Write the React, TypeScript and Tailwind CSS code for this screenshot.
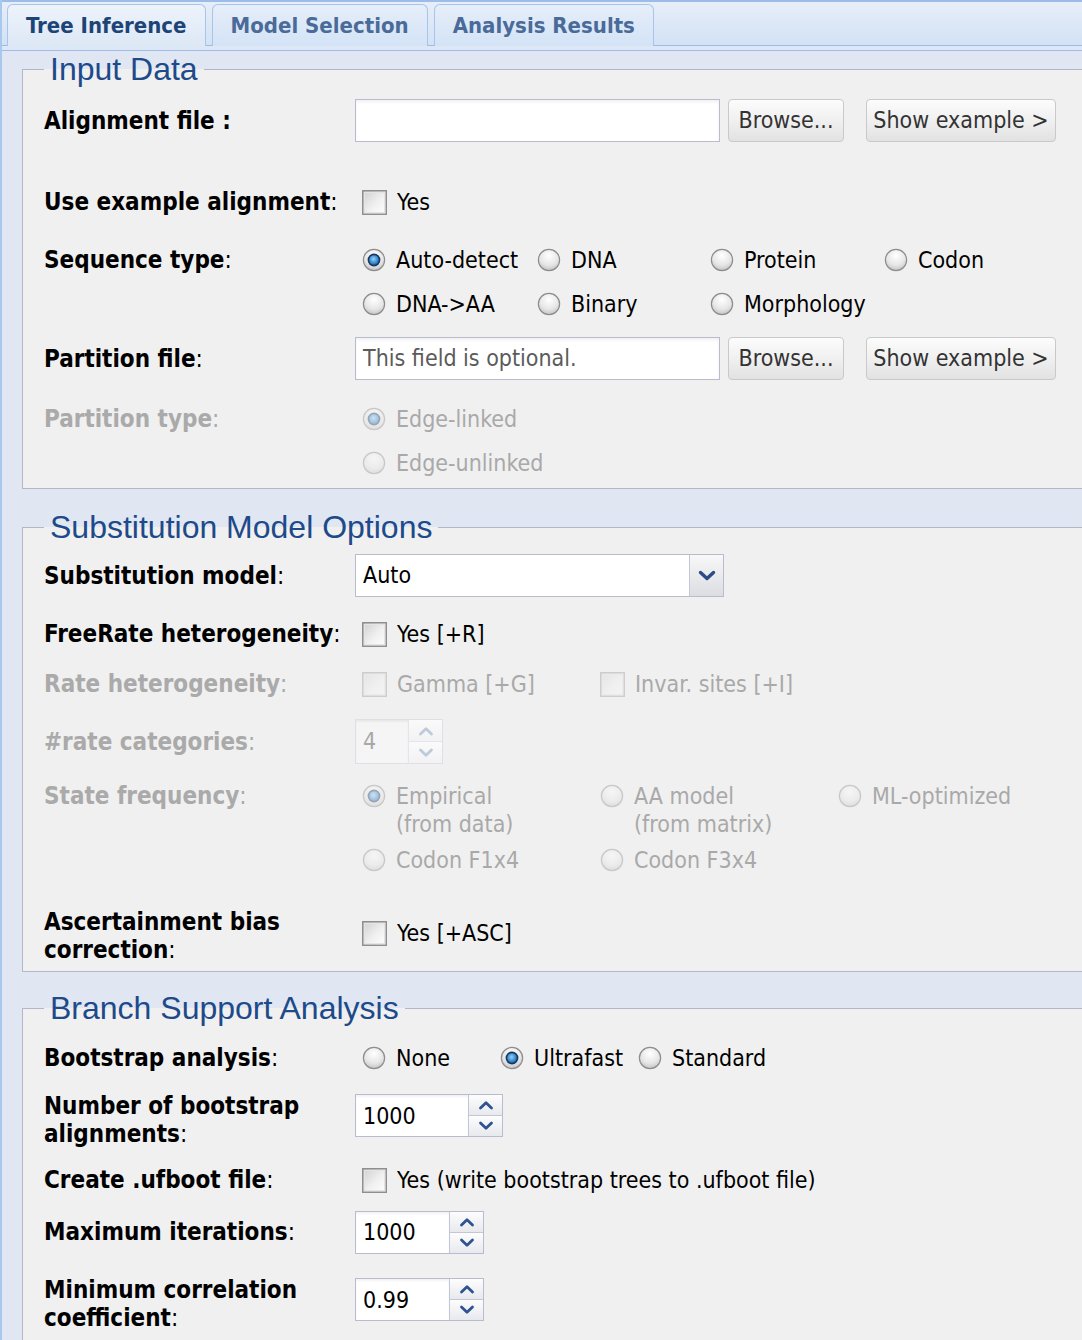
import React from "react";

const ui = "font-['DejaVu_Sans_Condensed','DejaVu_Sans',sans-serif]";
const legendFont = "font-['Liberation_Sans',Arial,sans-serif]";

function Radio({ checked = false, disabled = false }: { checked?: boolean; disabled?: boolean }) {
  const id = `r-${checked ? "on" : "off"}`;
  return (
    <svg width="24" height="24" viewBox="0 0 24 24" className={`shrink-0 ${disabled ? "opacity-40" : ""}`}>
      <defs>
        <radialGradient id={`${id}-bg`} cx="50%" cy="30%" r="75%">
          <stop offset="0" stopColor="#ffffff" />
          <stop offset="0.6" stopColor="#e6e6e6" />
          <stop offset="1" stopColor="#bdbdbd" />
        </radialGradient>
        <radialGradient id={`${id}-dot`} cx="45%" cy="40%" r="60%">
          <stop offset="0" stopColor="#8fd3fb" />
          <stop offset="1" stopColor="#1b6db6" />
        </radialGradient>
      </defs>
      <circle cx="12" cy="12" r="10.6" fill={`url(#${id}-bg)`} stroke="#8d8d8d" strokeWidth="1.2" />
      {checked && (
        <>
          <circle cx="12" cy="12" r="6.4" fill="#16355f" />
          <circle cx="12" cy="12" r="4.8" fill={`url(#${id}-dot)`} />
        </>
      )}
    </svg>
  );
}

function Checkbox({ disabled = false }: { disabled?: boolean }) {
  return (
    <svg width="25" height="25" viewBox="0 0 25 25" className={`shrink-0 ${disabled ? "opacity-35" : ""}`}>
      <defs>
        <linearGradient id="cb-bg" x1="0" y1="0" x2="1" y2="1">
          <stop offset="0" stopColor="#cfcfcf" />
          <stop offset="0.55" stopColor="#f0f0f0" />
          <stop offset="1" stopColor="#ffffff" />
        </linearGradient>
      </defs>
      <rect x="0.75" y="0.75" width="23.5" height="23.5" fill="url(#cb-bg)" stroke="#8f8f8f" strokeWidth="1.5" />
      <rect x="2.5" y="2.5" width="20" height="20" fill="none" stroke="#e4e4e4" strokeWidth="1" />
    </svg>
  );
}

function Chevron({ dir, disabled = false }: { dir: "up" | "down"; disabled?: boolean }) {
  return (
    <svg width="16" height="10" viewBox="0 0 16 10">
      <path
        d={dir === "up" ? "M2.5 8 L8 2.8 L13.5 8" : "M2.5 2 L8 7.2 L13.5 2"}
        stroke={disabled ? "#bccada" : "#2f5291"}
        strokeWidth="2.8"
        fill="none"
        strokeLinecap="round"
        strokeLinejoin="round"
      />
    </svg>
  );
}

function Button({ children, w }: { children: React.ReactNode; w: string }) {
  return (
    <div
      className={`${w} h-[43px] flex items-center justify-center rounded-[4px] border border-[#c9c9c9] bg-gradient-to-b from-[#fcfcfc] via-[#f0f0f0] to-[#e2e2e2] text-[#333333] text-[23px]`}
    >
      {children}
    </div>
  );
}

function Spin({ value, w, h = "h-[43px]", disabled = false }: { value: string; w: string; h?: string; disabled?: boolean }) {
  return (
    <div
      className={`${w} ${h} flex border ${
        disabled ? "border-[#dfdfe6] bg-[#f5f5f6] text-[#a8a8a8]" : "border-[#b9bcce] bg-white text-black"
      }`}
    >
      <div className="flex-1 flex items-center pl-[7px] text-[23px] shadow-[inset_0_2px_2px_rgba(0,0,0,0.05)]">{value}</div>
      <div className={`w-[34px] flex flex-col border-l ${disabled ? "border-[#e4e4ea]" : "border-[#c3c6d6]"}`}>
        <div
          className={`flex-1 flex items-center justify-center bg-gradient-to-b ${
            disabled ? "from-[#fafafa] to-[#f2f2f4]" : "from-[#fdfdfd] to-[#e8e9ee]"
          }`}
        >
          <Chevron dir="up" disabled={disabled} />
        </div>
        <div
          className={`flex-1 flex items-center justify-center border-t bg-gradient-to-b ${
            disabled ? "border-[#e4e4ea] from-[#fafafa] to-[#f2f2f4]" : "border-[#c3c6d6] from-[#fdfdfd] to-[#e8e9ee]"
          }`}
        >
          <Chevron dir="down" disabled={disabled} />
        </div>
      </div>
    </div>
  );
}

function Opt({
  kind,
  checked = false,
  disabled = false,
  children,
}: {
  kind: "radio" | "check";
  checked?: boolean;
  disabled?: boolean;
  children: React.ReactNode;
}) {
  return (
    <div className={`flex items-center gap-[10px] ${disabled ? "text-[#a9a9a9]" : "text-black"}`}>
      {kind === "radio" ? <Radio checked={checked} disabled={disabled} /> : <Checkbox disabled={disabled} />}
      <span className="whitespace-nowrap">{children}</span>
    </div>
  );
}

function Label({ children, disabled = false, colon = true }: { children: React.ReactNode; disabled?: boolean; colon?: boolean }) {
  return (
    <div className={`text-[24px] ${disabled ? "text-[#aaaaaa]" : "text-black"}`}>
      <span className="font-bold">{children}</span>
      {colon && ":"}
    </div>
  );
}

function Section({ title, children, className = "" }: { title: string; children: React.ReactNode; className?: string }) {
  return (
    <fieldset className={`ml-[20px] min-w-0 border border-r-0 border-[#b3b6c8] bg-[#f0f0f0] pl-[21px] ${className}`}>
      <legend className={`px-[6px] ${legendFont} text-[32px] leading-[37px] text-[#1d4a8a]`}>{title}</legend>
      {children}
    </fieldset>
  );
}

export default function App() {
  return (
    <div className={`${ui} w-[1082px] h-[1340px] overflow-hidden bg-[#e0e7f3] border-l-2 border-[#a9c8ee] text-[23px]`}>
      {/* tab bar */}
      <div className="h-[46px] border-t-2 border-b border-[#9cbde7] bg-gradient-to-b from-[#e7eef9] to-[#d2e2f5] flex items-end pl-[5px] gap-[6px]">
        <div className="h-[42px] -mb-[1px] px-[18px] flex items-center rounded-t-[6px] border border-b-0 border-[#a7c5ea] bg-gradient-to-b from-[#edf3fb] to-[#dde8f6] text-[#1c4476] font-bold text-[22px]">
          Tree Inference
        </div>
        <div className="h-[42px] -mb-[1px] px-[18px] flex items-center rounded-t-[6px] border border-b-0 border-[#a7c5ea] bg-gradient-to-b from-[#e6eef9] to-[#d3e3f6] text-[#4a6b99] font-bold text-[22px]">
          Model Selection
        </div>
        <div className="h-[42px] -mb-[1px] px-[18px] flex items-center rounded-t-[6px] border border-b-0 border-[#a7c5ea] bg-gradient-to-b from-[#e6eef9] to-[#d3e3f6] text-[#4a6b99] font-bold text-[22px]">
          Analysis Results
        </div>
      </div>
      <div className="h-[5px] bg-[#dde7f5] border-b border-[#9cbde7]" />

      {/* Input Data */}
      <Section title="Input Data" className="pb-[3px]">
        <div className="mt-[11px] grid grid-cols-[311px_1fr] items-center h-[43px]">
          <Label colon={false}>Alignment file :</Label>
          <div className="flex items-center">
            <div className="w-[365px] h-[43px] border border-[#b9bccf] bg-white shadow-[inset_0_2px_3px_rgba(0,0,0,0.06)]" />
            <div className="ml-[8px]">
              <Button w="w-[116px]">Browse...</Button>
            </div>
            <div className="ml-[22px]">
              <Button w="w-[190px]">Show example &gt;</Button>
            </div>
          </div>
        </div>

        <div className="mt-[40px] grid grid-cols-[311px_1fr] items-center h-[40px]">
          <Label>Use example alignment</Label>
          <div className="pl-[7px]">
            <Opt kind="check">Yes</Opt>
          </div>
        </div>

        <div className="mt-[16px] grid grid-cols-[311px_1fr]">
          <div className="h-[44px] flex items-center">
            <Label>Sequence type</Label>
          </div>
          <div className="pl-[7px] grid grid-cols-[175px_173px_174px_auto] auto-rows-[44px] items-center">
            <Opt kind="radio" checked>Auto-detect</Opt>
            <Opt kind="radio">DNA</Opt>
            <Opt kind="radio">Protein</Opt>
            <Opt kind="radio">Codon</Opt>
            <Opt kind="radio">DNA-&gt;AA</Opt>
            <Opt kind="radio">Binary</Opt>
            <Opt kind="radio">Morphology</Opt>
          </div>
        </div>

        <div className="mt-[11px] grid grid-cols-[311px_1fr] items-center h-[43px]">
          <Label>Partition file</Label>
          <div className="flex items-center">
            <div className="w-[365px] h-[43px] border border-[#b9bccf] bg-white shadow-[inset_0_2px_3px_rgba(0,0,0,0.06)] flex items-center pl-[7px] text-[#5b5b5b]">
              This field is optional.
            </div>
            <div className="ml-[8px]">
              <Button w="w-[116px]">Browse...</Button>
            </div>
            <div className="ml-[22px]">
              <Button w="w-[190px]">Show example &gt;</Button>
            </div>
          </div>
        </div>

        <div className="mt-[17px] grid grid-cols-[311px_1fr]">
          <div className="h-[44px] flex items-center">
            <Label disabled>Partition type</Label>
          </div>
          <div className="pl-[7px] grid auto-rows-[44px] items-center">
            <Opt kind="radio" checked disabled>Edge-linked</Opt>
            <Opt kind="radio" disabled>Edge-unlinked</Opt>
          </div>
        </div>
      </Section>

      {/* Substitution Model Options */}
      <Section title="Substitution Model Options" className="mt-[20px] pb-[7px]">
        <div className="mt-[8px] grid grid-cols-[311px_1fr] items-center h-[43px]">
          <Label>Substitution model</Label>
          <div className="w-[369px] h-[43px] flex border border-[#b9bccf] bg-white">
            <div className="flex-1 flex items-center pl-[7px]">Auto</div>
            <div className="w-[34px] flex items-center justify-center border-l border-[#c3c6d6] bg-gradient-to-b from-[#f8f8f8] to-[#dcdde2]">
              <svg width="18" height="11" viewBox="0 0 18 11">
                <path d="M2.5 2.5 L9 8.5 L15.5 2.5" stroke="#2b4c86" strokeWidth="3.4" fill="none" strokeLinecap="round" strokeLinejoin="round" />
              </svg>
            </div>
          </div>
        </div>

        <div className="mt-[15px] grid grid-cols-[311px_1fr] items-center h-[44px]">
          <Label>FreeRate heterogeneity</Label>
          <div className="pl-[7px]">
            <Opt kind="check">Yes [+R]</Opt>
          </div>
        </div>

        <div className="mt-[6px] grid grid-cols-[311px_1fr] items-center h-[44px]">
          <Label disabled>Rate heterogeneity</Label>
          <div className="pl-[7px] grid grid-cols-[238px_auto]">
            <Opt kind="check" disabled>Gamma [+G]</Opt>
            <Opt kind="check" disabled>Invar. sites [+I]</Opt>
          </div>
        </div>

        <div className="mt-[13px] grid grid-cols-[311px_1fr] items-center h-[45px]">
          <Label disabled>#rate categories</Label>
          <Spin value="4" w="w-[88px]" h="h-[45px]" disabled />
        </div>

        <div className="mt-[18px] grid grid-cols-[311px_1fr] leading-[28px]">
          <Label disabled>State frequency</Label>
          <div className="pl-[7px] grid grid-cols-[238px_238px_auto] gap-y-[8px] text-[#a9a9a9]">
            {[
              ["Empirical", "(from data)", true],
              ["AA model", "(from matrix)", false],
              ["ML-optimized", "", false],
              ["Codon F1x4", "", false],
              ["Codon F3x4", "", false],
            ].map(([a, b, c], i) => (
              <div key={i} className="flex items-start gap-[10px]">
                <div className="mt-[2px]">
                  <Radio checked={c as boolean} disabled />
                </div>
                <div className="whitespace-nowrap">
                  <div>{a}</div>
                  {b && <div>{b}</div>}
                </div>
              </div>
            ))}
          </div>
        </div>

        <div className="mt-[34px] grid grid-cols-[311px_1fr] items-center leading-[28px]">
          <div className="font-bold text-[24px]">
            Ascertainment bias
            <br />
            correction<span className="font-normal">:</span>
          </div>
          <div className="pl-[7px] mb-[6px]">
            <Opt kind="check">Yes [+ASC]</Opt>
          </div>
        </div>
      </Section>

      {/* Branch Support Analysis */}
      <Section title="Branch Support Analysis" className="mt-[18px] pb-[40px]">
        <div className="mt-[9px] grid grid-cols-[311px_1fr] items-center h-[44px]">
          <Label>Bootstrap analysis</Label>
          <div className="pl-[7px] grid grid-cols-[138px_138px_auto]">
            <Opt kind="radio">None</Opt>
            <Opt kind="radio" checked>Ultrafast</Opt>
            <Opt kind="radio">Standard</Opt>
          </div>
        </div>

        <div className="mt-[12px] grid grid-cols-[311px_1fr] items-start leading-[28px]">
          <div className="font-bold text-[24px]">
            Number of bootstrap
            <br />
            alignments<span className="font-normal">:</span>
          </div>
          <div className="mt-[2px]">
            <Spin value="1000" w="w-[148px]" />
          </div>
        </div>

        <div className="mt-[10px] grid grid-cols-[311px_1fr] items-center h-[44px]">
          <Label>Create .ufboot file</Label>
          <div className="pl-[7px]">
            <Opt kind="check">Yes (write bootstrap trees to .ufboot file)</Opt>
          </div>
        </div>

        <div className="mt-[8px] grid grid-cols-[311px_1fr] items-center h-[44px]">
          <Label>Maximum iterations</Label>
          <Spin value="1000" w="w-[129px]" />
        </div>

        <div className="mt-[22px] grid grid-cols-[311px_1fr] items-start leading-[28px]">
          <div className="font-bold text-[24px]">
            Minimum correlation
            <br />
            coefficient<span className="font-normal">:</span>
          </div>
          <div className="mt-[2px]">
            <Spin value="0.99" w="w-[129px]" />
          </div>
        </div>
      </Section>
    </div>
  );
}
